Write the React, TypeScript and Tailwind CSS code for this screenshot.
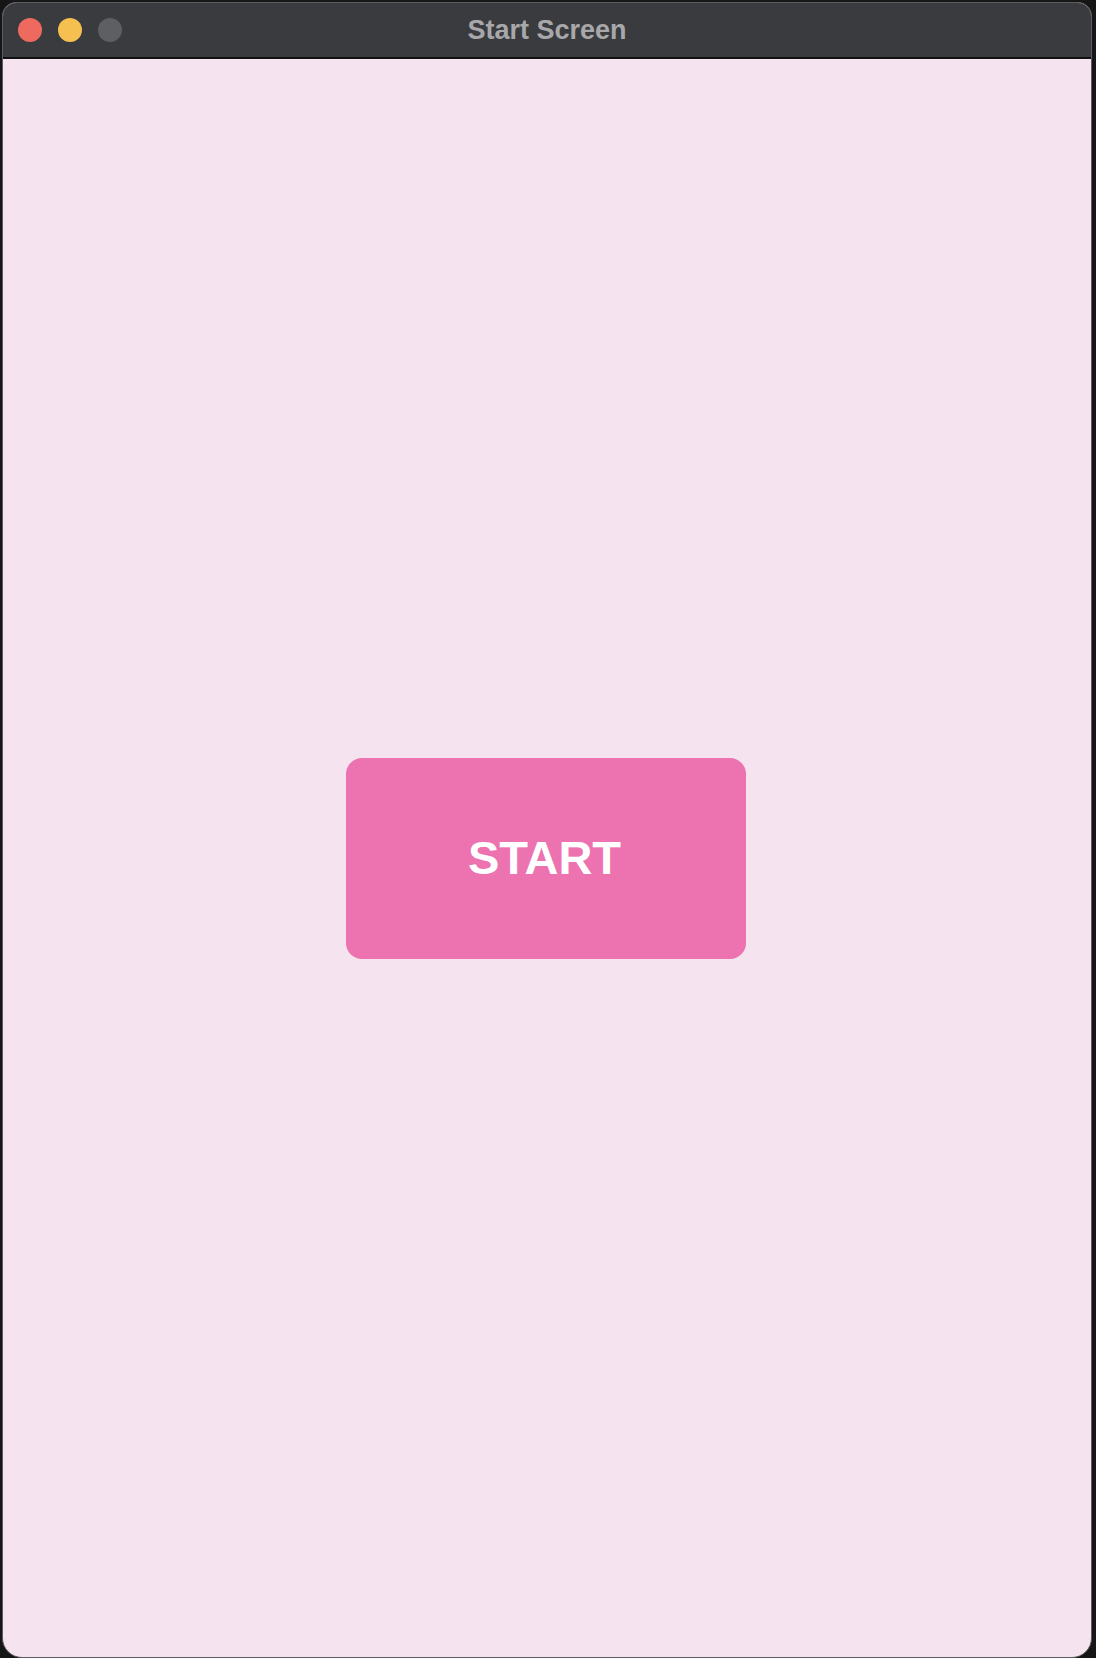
export default function App() {
  return (
    <div className="h-[1658px] w-[1096px] bg-[#161616] pl-[2px] pr-[4px] pt-[2px] font-['Liberation_Sans',Arial,sans-serif]">
      <div className="flex h-[1656px] flex-col overflow-hidden rounded-t-[14px] rounded-b-[20px] border border-[#5b5c60] bg-[#f5e4ef]">
        <div className="relative flex h-[56px] shrink-0 items-center border-b-2 border-[#111113] bg-[#3a3b3f]">
          <div className="absolute left-[15px] top-[15px] flex gap-[16px]">
            <span className="h-[24px] w-[24px] rounded-full bg-[#ee6a5f]" />
            <span className="h-[24px] w-[24px] rounded-full bg-[#f5c04f]" />
            <span className="h-[24px] w-[24px] rounded-full bg-[#5e5f63]" />
          </div>
          <div className="w-full text-center text-[27px] font-bold leading-none text-[#a8a8ab]">
            Start Screen
          </div>
        </div>
        <div className="flex flex-1 items-center justify-center pr-[2px]">
          <button className="flex h-[201px] w-[400px] items-center justify-center rounded-[16px] bg-[#ec72b0] pr-[3px] text-[47px] font-bold text-white">
            START
          </button>
        </div>
      </div>
    </div>
  );
}
